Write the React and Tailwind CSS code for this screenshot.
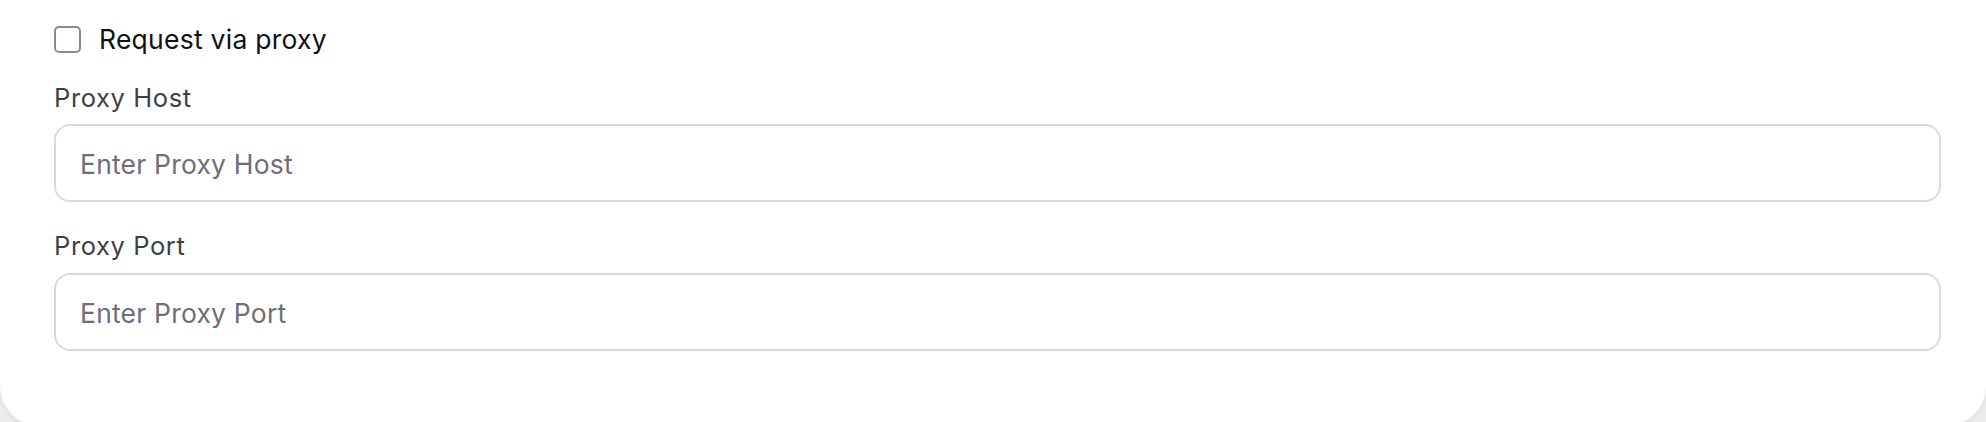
import React from "react";

export default function App() {
  return (
    <div className="h-[422px] w-full overflow-hidden bg-[#ececec]" style={{ fontFamily: "Inter, 'Noto Sans', sans-serif" }}>
      <div className="h-[426px] w-full rounded-b-[40px] bg-white pl-[54px] pr-[45px] pt-[21px] shadow-[0_2px_10px_rgba(0,0,0,0.06)]">
        <label className="flex h-[36px] items-center gap-[18px]">
          <span className="block h-[27px] w-[27px] rounded-[5px] border-2 border-[#8b8898] bg-white" />
          <span className="text-[26.5px] leading-[36px] tracking-[0.25px] text-[#111114]">Request via proxy</span>
        </label>
        <div className="mt-[25px] flex flex-col gap-[10px]">
          <div className="text-[25.5px] leading-[32px] tracking-[0.6px] text-[#3f3f46]">Proxy Host</div>
          <input
            className="h-[78px] w-full rounded-[16px] border-2 border-[#dadada] bg-white px-[24px] pt-[2px] text-[26.5px] tracking-[0.2px] text-[#3f3f46] outline-none placeholder:text-[#6e6e78]"
            placeholder="Enter Proxy Host"
          />
        </div>
        <div className="mt-[28px] flex flex-col gap-[11px]">
          <div className="text-[25.5px] leading-[32px] tracking-[0.6px] text-[#3f3f46]">Proxy Port</div>
          <input
            className="h-[78px] w-full rounded-[16px] border-2 border-[#dadada] bg-white px-[24px] pt-[2px] text-[26.5px] tracking-[0.2px] text-[#3f3f46] outline-none placeholder:text-[#6e6e78]"
            placeholder="Enter Proxy Port"
          />
        </div>
      </div>
    </div>
  );
}
